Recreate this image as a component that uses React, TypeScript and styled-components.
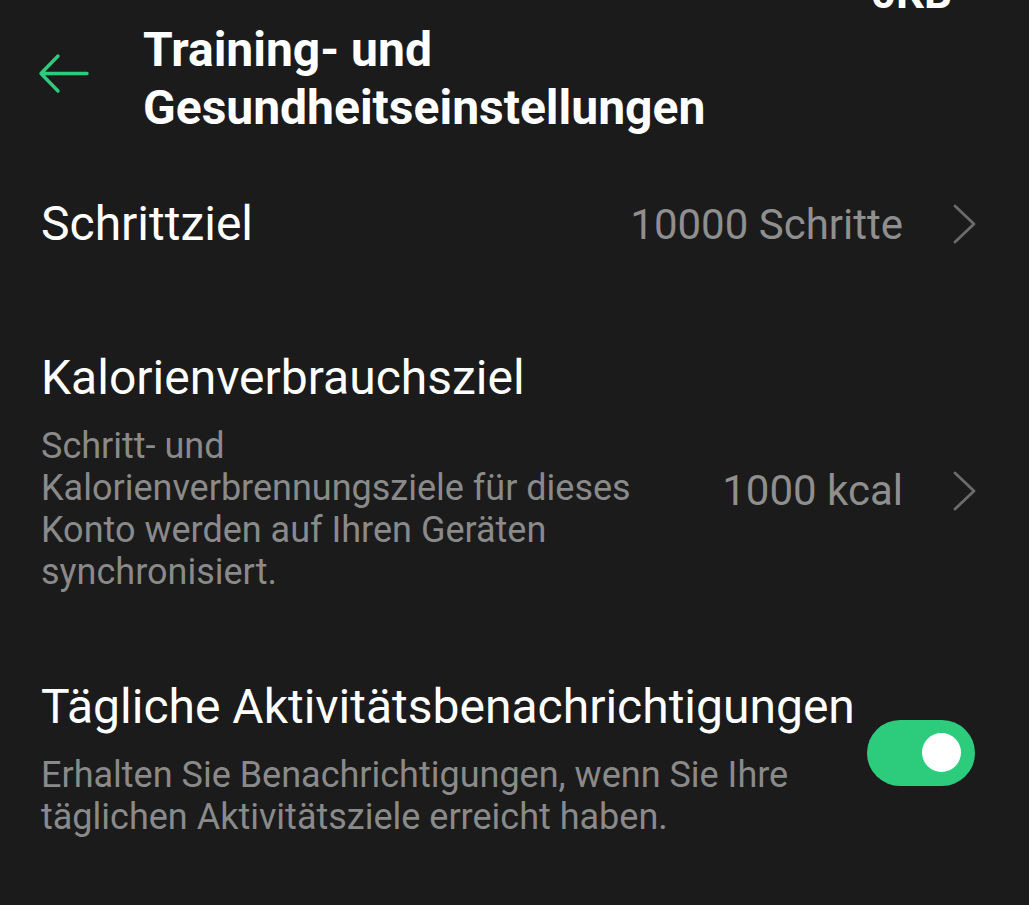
import styled, { createGlobalStyle } from 'styled-components';

const GREEN = '#2dcc7d';
const BG = '#1b1b1b';

const GlobalStyle = createGlobalStyle`
  html, body {
    margin: 0;
    padding: 0;
    background: ${BG};
  }
  body {
    font-family: Roboto, 'Noto Sans', sans-serif;
    color: #ffffff;
    -webkit-font-smoothing: antialiased;
  }
`;

function App() {
  return (
    <>
      <GlobalStyle />
      <Screen>
        <StatusBar>
          <Traffic>0KB</Traffic>
        </StatusBar>

        <Header>
          <BackButton aria-label="Zurück">
            <svg width="52" height="41" viewBox="0 0 52 41" fill="none">
              <path d="M49 20.5H3M20 3L3 20.5 20 38" stroke={GREEN} strokeWidth="3.4" strokeLinecap="round" strokeLinejoin="round" />
            </svg>
          </BackButton>
          <Title>Training- und Gesundheitseinstellungen</Title>
        </Header>

        <List>
          <Item $pad="59px 0 49px">
            <ItemText>
              <ItemTitle>Schrittziel</ItemTitle>
            </ItemText>
            <Trailing>
              <Value>10000 Schritte</Value>
              <Chevron />
            </Trailing>
          </Item>

          <Item $pad="49px 0 43px">
            <ItemText $max="600px">
              <ItemTitle>Kalorienverbrauchsziel</ItemTitle>
              <ItemHint>
                Schritt- und Kalorienverbrennungsziele für dieses Konto werden auf Ihren Geräten synchronisiert.
              </ItemHint>
            </ItemText>
            <Trailing $shift={19}>
              <Value>1000 kcal</Value>
              <Chevron />
            </Trailing>
          </Item>

          <Item $pad="43px 0 43px" $gap="12px">
            <ItemText>
              <ItemTitle>Tägliche Aktivitätsbenachrichtigungen</ItemTitle>
              <ItemHint>
                Erhalten Sie Benachrichtigungen, wenn Sie Ihre täglichen Aktivitätsziele erreicht haben.
              </ItemHint>
            </ItemText>
            <Trailing $shift={-6}>
              <Toggle $on>
                <Knob />
              </Toggle>
            </Trailing>
          </Item>
        </List>
      </Screen>
    </>
  );
}

function Chevron() {
  return (
    <ChevronBox>
      <svg width="26" height="40" viewBox="0 0 26 40" fill="none">
        <path d="M3 2l19 18L3 38" stroke="#6b6b6b" strokeWidth="2.8" strokeLinecap="round" strokeLinejoin="round" />
      </svg>
    </ChevronBox>
  );
}

export default App;

const Screen = styled.div`
  width: 1029px;
  height: 905px;
  overflow: hidden;
  background: ${BG};
  display: flex;
  flex-direction: column;
`;

const StatusBar = styled.div`
  height: 9px;
  overflow: hidden;
  display: flex;
  justify-content: flex-end;
  align-items: flex-end;
  padding-right: 77px;
`;

const Traffic = styled.span`
  font-size: 44px;
  font-weight: 700;
  line-height: 32px;
  height: 32px;
  flex-shrink: 0;
`;

const Header = styled.header`
  display: flex;
  align-items: flex-start;
  padding: 12px 40px 0 38px;
`;

const BackButton = styled.button`
  border: 0;
  background: none;
  padding: 0;
  margin-top: 32px;
  width: 105px;
  display: flex;
  cursor: pointer;
`;

const Title = styled.h1`
  margin: 0;
  font-size: 48px;
  font-weight: 700;
  line-height: 58px;
  width: 640px;
`;

const List = styled.div`
  display: flex;
  flex-direction: column;
  padding: 0 51px 0 41px;
`;

const Item = styled.div<{ $pad: string; $gap?: string }>`
  display: flex;
  align-items: center;
  gap: ${(p) => p.$gap ?? '24px'};
  padding: ${(p) => p.$pad};
`;

const ItemText = styled.div<{ $max?: string }>`
  flex: 1;
  max-width: ${(p) => p.$max ?? 'none'};
  display: flex;
  flex-direction: column;
  gap: 19px;
`;

const ItemTitle = styled.div`
  font-size: 48px;
  line-height: 56px;
  color: #ffffff;
  white-space: nowrap;
`;

const ItemHint = styled.div`
  font-size: 36px;
  line-height: 42px;
  color: #8a8a8a;
`;

const Trailing = styled.div<{ $shift?: number }>`
  margin-left: auto;
  display: flex;
  align-items: center;
  flex-shrink: 0;
  transform: translateY(${(p) => p.$shift ?? 0}px);
`;

const Value = styled.div`
  font-size: 42px;
  color: #8f8f8f;
  white-space: nowrap;
`;

const ChevronBox = styled.span`
  display: flex;
  margin-left: 49px;
`;

const Toggle = styled.div<{ $on?: boolean }>`
  width: 108px;
  height: 66px;
  border-radius: 33px;
  margin-right: 4px;
  background: ${(p) => (p.$on ? GREEN : '#555')};
  display: flex;
  align-items: center;
  justify-content: ${(p) => (p.$on ? 'flex-end' : 'flex-start')};
  padding: 0 14px;
  box-sizing: border-box;
`;

const Knob = styled.div`
  width: 39px;
  height: 39px;
  border-radius: 50%;
  background: #ffffff;
`;
